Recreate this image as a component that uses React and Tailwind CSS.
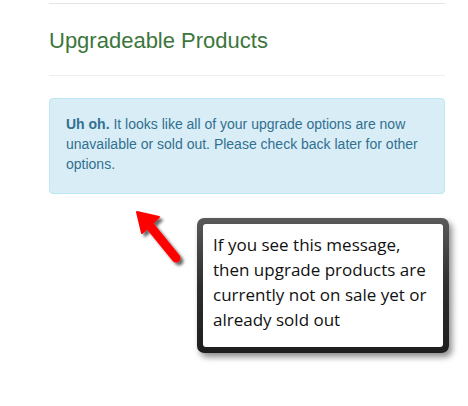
import React from 'react';

const App = () => {
    return (
        <div className="relative w-[468px] h-[406px] bg-white overflow-hidden" style={{ fontFamily: '"Liberation Sans", Arial, sans-serif' }}>
            {/* Content column */}
            <div className="ml-[49px] w-[396px] pt-[3px]">
                <div className="border-t border-[#e5e5e5]"></div>
                <h3 className="text-[22px] leading-[26px] text-[#3c763d] mt-[24px] mb-[21px]">Upgradeable Products</h3>
                <div className="border-t border-[#eeeeee]"></div>

                <div className="mt-[22px] bg-[#d9edf7] border border-[#bce8f1] rounded-[4px] pl-[16px] pr-[12px] pt-[15px] pb-[19px] text-[14px] leading-[20px] text-[#31708f]">
                    <p>
                        <strong className="font-bold">Uh oh.</strong> It looks like all of your upgrade options are now unavailable or sold out. Please check back later for other options.
                    </p>
                </div>
            </div>

            {/* Red arrow annotation */}
            <svg className="absolute left-[128px] top-[204px]" width="70" height="72" viewBox="0 0 70 72">
                <defs>
                    <filter id="arrowShadow" x="-30%" y="-30%" width="160%" height="160%">
                        <feGaussianBlur in="SourceAlpha" stdDeviation="1.6" />
                        <feOffset dx="3" dy="3" result="b" />
                        <feComponentTransfer><feFuncA type="linear" slope="0.6" /></feComponentTransfer>
                        <feMerge>
                            <feMergeNode />
                            <feMergeNode in="SourceGraphic" />
                        </feMerge>
                    </filter>
                </defs>
                <g filter="url(#arrowShadow)">
                    <line x1="22" y1="22" x2="48" y2="54" stroke="#ff0000" strokeWidth="9" strokeLinecap="round" />
                    <polygon points="9,8 31,13 14,29" fill="#ff0000" stroke="#ff0000" strokeWidth="2" strokeLinejoin="round" />
                </g>
            </svg>

            {/* Callout box */}
            <div className="absolute left-[197px] top-[218px] w-[252px] h-[135px] rounded-[7px] p-[6px] bg-gradient-to-b from-[#5a5a5a] via-[#2e2e2e] to-[#1e1e1e] shadow-[3px_4px_6px_rgba(0,0,0,0.45)]">
                <div className="w-full h-full bg-white rounded-[3px] pl-[10px] pr-[6px] pt-[8px] text-[17px] leading-[25px] text-[#111111]" style={{ fontFamily: '"Open Sans", "Noto Sans", sans-serif' }}>
                    If you see this message, then upgrade products are currently not on sale yet or already sold out
                </div>
            </div>
        </div>
    );
};

export default App;
